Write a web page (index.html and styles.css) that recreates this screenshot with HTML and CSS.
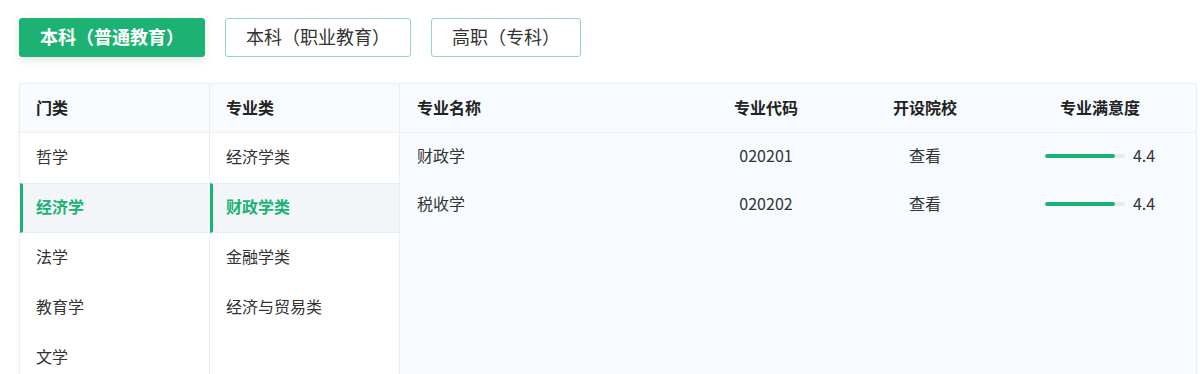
FILE: index.html
```html
<!DOCTYPE html>
<html lang="zh-CN">
<head>
  <meta charset="UTF-8" />
  <title>专业库</title>
  <meta name="viewport" content="width=device-width, initial-scale=1.0"/>
  <link rel="stylesheet" href="styles.css">
</head>
<body>

<div class="pagina">
  <!-- abas de nível -->
  <div class="abas">
    <button class="aba ativa">本科（普通教育）</button>
    <button class="aba">本科（职业教育）</button>
    <button class="aba">高职（专科）</button>
  </div>

  <div class="painel">
    <div class="coluna">
      <div class="cabeca">门类</div>
      <div class="item">哲学</div>
      <div class="item ativo">经济学</div>
      <div class="item">法学</div>
      <div class="item">教育学</div>
      <div class="item">文学</div>
      <div class="item">历史学</div>
    </div>

    <div class="coluna">
      <div class="cabeca">专业类</div>
      <div class="item">经济学类</div>
      <div class="item ativo">财政学类</div>
      <div class="item">金融学类</div>
      <div class="item">经济与贸易类</div>
    </div>

    <div class="lista">
      <div class="linha topo">
        <div class="nome">专业名称</div>
        <div class="centro">专业代码</div>
        <div class="centro">开设院校</div>
        <div class="centro">专业满意度</div>
      </div>
      <div class="linha">
        <div class="nome">财政学</div>
        <div class="centro">020201</div>
        <div class="centro">查看</div>
        <div class="centro nota">
          <span class="barra"><span class="cheio" style="width: 88%"></span></span>
          <span>4.4</span>
        </div>
      </div>
      <div class="linha">
        <div class="nome">税收学</div>
        <div class="centro">020202</div>
        <div class="centro">查看</div>
        <div class="centro nota">
          <span class="barra"><span class="cheio" style="width: 88%"></span></span>
          <span>4.4</span>
        </div>
      </div>
    </div>
  </div>
</div>

</body>
</html>
```

FILE: styles.css
```css
html {
  overflow: hidden;
}

body {
  margin: 0;
  background-color: #fff;
  font-family: 'Noto Sans CJK SC', 'Noto Sans', sans-serif;
  color: #333;
}

.pagina {
  padding: 18px 0 0 19px;
  width: 1178px;
}

.abas {
  display: flex;
  gap: 20px;
}

.aba {
  height: 39px;
  padding: 0 20px 2px;
  font-family: inherit;
  font-size: 18px;
  line-height: 35px;
  color: #333;
  background-color: #fff;
  border: 1px solid #8fd8b9;
  border-radius: 3px;
  cursor: pointer;
}

.aba.ativa {
  background-color: #1cb274;
  border-color: #1cb274;
  color: #fff;
  font-weight: bold;
  box-shadow: 0 3px 8px rgba(0,0,0,0.12);
}

.painel {
  display: flex;
  margin-top: 26px;
  border: 1px solid #e8eef3;
  border-bottom: none;
  min-height: 320px;
}

.coluna {
  width: 189px;
  border-right: 1px solid #e8eef3;
  background-color: #fff;
}

.cabeca {
  height: 48px;
  line-height: 46px;
  padding-left: 16px;
  font-size: 16px;
  font-weight: bold;
  color: #222;
  background-color: #f8fbfd;
  border-bottom: 1px solid #edf1f5;
}

.item {
  box-sizing: border-box;
  height: 50px;
  line-height: 45px;
  padding-left: 16px;
  font-size: 16px;
  border-top: 1px solid transparent;
  border-bottom: 1px solid transparent;
}

.item.ativo {
  background-color: #f3f6f9;
  border-top-color: #e9eef3;
  border-bottom-color: #e9eef3;
  border-left: 3px solid #1cb274;
  padding-left: 13px;
  color: #1cb274;
  font-weight: bold;
}

.lista {
  flex: 1;
  background-color: #f7fbff;
}

.linha {
  display: grid;
  grid-template-columns: 286px 160px 158px 1fr;
  height: 48px;
  line-height: 45px;
  font-size: 16px;
}

.linha.topo {
  line-height: 46px;
  border-bottom: 1px solid #edf1f5;
  font-weight: bold;
  color: #222;
}

.nome {
  padding-left: 17px;
}

.centro {
  text-align: center;
}

.nota {
  display: flex;
  align-items: center;
  justify-content: center;
  gap: 8px;
  padding-bottom: 3px;
}

.barra {
  display: block;
  width: 80px;
  height: 4px;
  border-radius: 2px;
  background-color: #e6e9ec;
  overflow: hidden;
}

.cheio {
  display: block;
  height: 100%;
  border-radius: 2px;
  background-color: #1cb274;
}
```
